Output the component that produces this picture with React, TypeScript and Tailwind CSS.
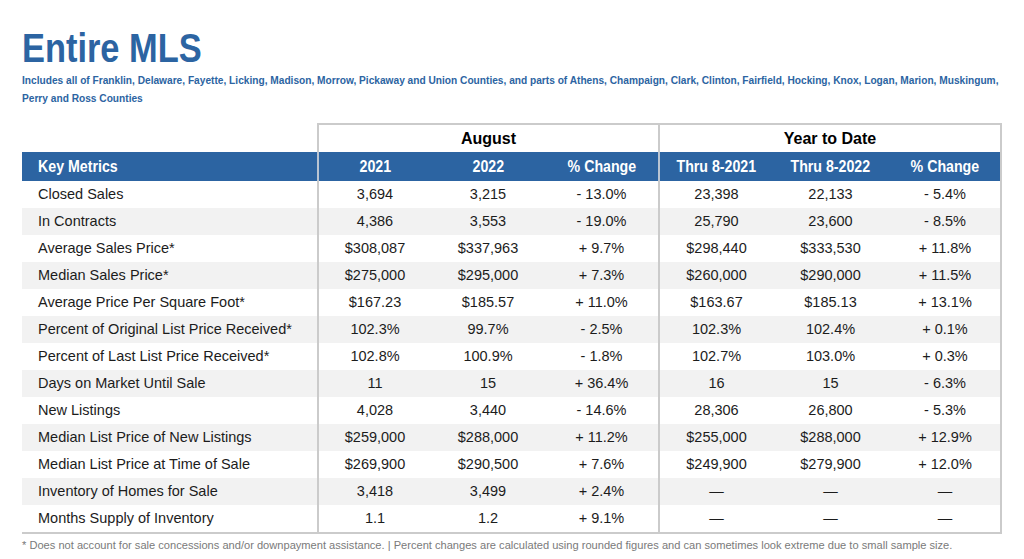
const rows: [string, string, string, string, string, string, string][] = [
  ["Closed Sales", "3,694", "3,215", "- 13.0%", "23,398", "22,133", "- 5.4%"],
  ["In Contracts", "4,386", "3,553", "- 19.0%", "25,790", "23,600", "- 8.5%"],
  ["Average Sales Price*", "$308,087", "$337,963", "+ 9.7%", "$298,440", "$333,530", "+ 11.8%"],
  ["Median Sales Price*", "$275,000", "$295,000", "+ 7.3%", "$260,000", "$290,000", "+ 11.5%"],
  ["Average Price Per Square Foot*", "$167.23", "$185.57", "+ 11.0%", "$163.67", "$185.13", "+ 13.1%"],
  ["Percent of Original List Price Received*", "102.3%", "99.7%", "- 2.5%", "102.3%", "102.4%", "+ 0.1%"],
  ["Percent of Last List Price Received*", "102.8%", "100.9%", "- 1.8%", "102.7%", "103.0%", "+ 0.3%"],
  ["Days on Market Until Sale", "11", "15", "+ 36.4%", "16", "15", "- 6.3%"],
  ["New Listings", "4,028", "3,440", "- 14.6%", "28,306", "26,800", "- 5.3%"],
  ["Median List Price of New Listings", "$259,000", "$288,000", "+ 11.2%", "$255,000", "$288,000", "+ 12.9%"],
  ["Median List Price at Time of Sale", "$269,900", "$290,500", "+ 7.6%", "$249,900", "$279,900", "+ 12.0%"],
  ["Inventory of Homes for Sale", "3,418", "3,499", "+ 2.4%", "—", "—", "—"],
  ["Months Supply of Inventory", "1.1", "1.2", "+ 9.1%", "—", "—", "—"],
]

const cols = "grid grid-cols-[295px_114px_114px_113px_115px_115px_114px]"

// narrow headline type: Arial-width bold squeezed horizontally
function Narrow({ children, className = "" }: { children: React.ReactNode; className?: string }) {
  return <span className={`inline-block whitespace-nowrap font-bold scale-x-[0.86] ${className}`}>{children}</span>
}

const headers = ["2021", "2022", "% Change", "Thru 8-2021", "Thru 8-2022", "% Change"]

export default function App() {
  return (
    <div className="min-h-screen overflow-hidden bg-white pl-[22px] pt-[26px] font-['Liberation_Sans',Arial,sans-serif]">
      <h1 className="text-[40px] leading-[45px] text-[#2c64a2]">
        <Narrow className="origin-left scale-x-[0.85]">Entire MLS</Narrow>
      </h1>
      <div className="w-[990px] overflow-hidden text-[11.5px] leading-[18px] text-[#2c64a2]">
        <div>
          <Narrow className="origin-left scale-x-[0.883]">
            Includes all of Franklin, Delaware, Fayette, Licking, Madison, Morrow, Pickaway and Union Counties, and parts of Athens, Champaign, Clark, Clinton, Fairfield, Hocking, Knox, Logan, Marion, Muskingum,
          </Narrow>
        </div>
        <div>
          <Narrow className="origin-left scale-x-[0.883]">Perry and Ross Counties</Narrow>
        </div>
      </div>

      <div className="mt-[16px] w-[980px]">
        <div className={`${cols} h-[29px] text-[16px] font-bold text-black`}>
          <div />
          <div className="col-span-3 flex items-center justify-center border-l-2 border-t-2 border-[#cbcbcb] pt-[1px]">
            August
          </div>
          <div className="col-span-3 flex items-center justify-center border-l-2 border-r-2 border-t-2 border-[#cbcbcb] pt-[1px]">
            Year to Date
          </div>
        </div>

        <div className="border-b-2 border-r-2 border-[#cbcbcb]">
          <div className={`${cols} h-[29px] bg-[#2c64a2] text-[16.5px] text-white`}>
            <div className="flex items-center pl-[16px]">
              <Narrow className="origin-left">Key Metrics</Narrow>
            </div>
            {headers.map((h, i) => (
              <div
                key={i}
                className={`flex items-center justify-center ${i % 3 === 0 ? "border-l-2 border-[#b9c4d2]" : ""}`}
              >
                <Narrow>{h}</Narrow>
              </div>
            ))}
          </div>

          {rows.map((r, i) => (
            <div
              key={r[0]}
              className={`${cols} h-[27px] text-[14.5px] text-[#1c1c1c] ${i % 2 === 1 ? "bg-[#f2f2f2]" : "bg-white"}`}
            >
              <div className="flex items-center pl-[16px]">{r[0]}</div>
              {r.slice(1).map((v, j) => (
                <div
                  key={j}
                  className={`flex items-center justify-center ${j % 3 === 0 ? "border-l-2 border-[#cbcbcb]" : ""}`}
                >
                  {v}
                </div>
              ))}
            </div>
          ))}
        </div>
      </div>

      <p className="mt-[4px] text-[11.1px] leading-[14px] text-[#7a7a7a]">
        * Does not account for sale concessions and/or downpayment assistance. | Percent changes are calculated using rounded figures and can sometimes look extreme due to small sample size.
      </p>
    </div>
  )
}
